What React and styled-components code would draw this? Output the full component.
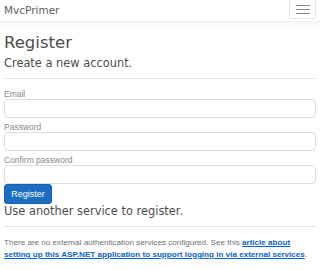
import React from "react";
import styled, { createGlobalStyle } from "styled-components";

const Global = createGlobalStyle`
  html, body { margin: 0; padding: 0; background: #fff; }
  body { font-family: "Liberation Sans", Arial, sans-serif; color: #212529; }
  * { box-sizing: border-box; }
`;

const Navbar = styled.nav`
  height: 22px;
  display: flex;
  justify-content: space-between;
  align-items: flex-start;
  padding: 0 4px;
  background: #fff;
  border-bottom: 1px solid #f2f2f2;
  box-shadow: 0 2px 6px rgba(0, 0, 0, 0.05);
`;

const Brand = styled.a`
  font-family: "DejaVu Sans", sans-serif;
  font-size: 10.5px;
  line-height: 12px;
  color: #616161;
  padding-top: 4px;
  text-decoration: none;
`;

const Toggler = styled.button`
  width: 27px;
  height: 20px;
  margin-top: -1px;
  border: 1px solid rgba(0, 0, 0, 0.1);
  border-radius: 3px;
  background: #fff;
  padding: 0;
  display: flex;
  flex-direction: column;
  align-items: center;
  justify-content: center;
  gap: 3px;
`;

const Bar = styled.span`
  display: block;
  width: 14px;
  height: 1px;
  background: #8a8a8a;
`;

const Main = styled.main`
  padding: 0 4px;
`;

const Title = styled.h1`
  font-family: "DejaVu Sans", sans-serif;
  font-weight: 400;
  font-size: 16.5px;
  line-height: 20px;
  color: #4d4d4d;
  margin: 11px 0 0;
`;

const SubTitle = styled.h2`
  font-family: "DejaVu Sans", sans-serif;
  font-weight: 400;
  font-size: 11.4px;
  line-height: 14px;
  color: #4d4d4d;
  margin: ${(p) => p.$top || 0}px 0 0;
`;

const Rule = styled.hr`
  border: 0;
  border-top: 1px solid #e6e6e6;
  margin: ${(p) => p.$top}px 0 0;
`;

const Form = styled.form`
  display: flex;
  flex-direction: column;
  gap: 4px;
  margin-top: 10px;
`;

const Field = styled.div`
  display: flex;
  flex-direction: column;
`;

const Label = styled.label`
  font-size: 8.5px;
  line-height: 10px;
  color: #8a8a8a;
`;

const Input = styled.input`
  height: 19px;
  width: 100%;
  border: 1px solid #dcdcdc;
  border-radius: 4px;
  background: #fff;
`;

const Button = styled.button`
  align-self: flex-start;
  width: 48px;
  height: 20px;
  margin-top: -4px;
  padding: 0;
  border: 1px solid #1861ac;
  border-radius: 3px;
  background: #1b6ec2;
  color: #fff;
  font-family: "Liberation Sans", Arial, sans-serif;
  font-size: 9px;
`;

const Note = styled.p`
  font-size: 8.1px;
  line-height: 12px;
  color: #707070;
  margin: 10px 0 0;
`;

const Link = styled.a`
  color: #0a63c9;
  font-weight: 700;
  text-decoration: underline;
`;

export default function App() {
  return (
    <>
      <Global />
      <Navbar>
        <Brand href="#">MvcPrimer</Brand>
        <Toggler type="button" aria-label="Toggle navigation">
          <Bar />
          <Bar />
          <Bar />
        </Toggler>
      </Navbar>
      <Main>
        <Title>Register</Title>
        <SubTitle $top={3}>Create a new account.</SubTitle>
        <Rule $top={8} />
        <Form>
          <Field>
            <Label>Email</Label>
            <Input type="email" />
          </Field>
          <Field>
            <Label>Password</Label>
            <Input type="password" />
          </Field>
          <Field>
            <Label>Confirm password</Label>
            <Input type="password" />
          </Field>
          <Button type="button">Register</Button>
        </Form>
        <SubTitle $top={0}>Use another service to register.</SubTitle>
        <Rule $top={8} />
        <Note>
          There are no external authentication services configured. See this{" "}
          <Link href="#">
            article about setting up this ASP.NET application to support logging in via external services
          </Link>
          .
        </Note>
      </Main>
    </>
  );
}
